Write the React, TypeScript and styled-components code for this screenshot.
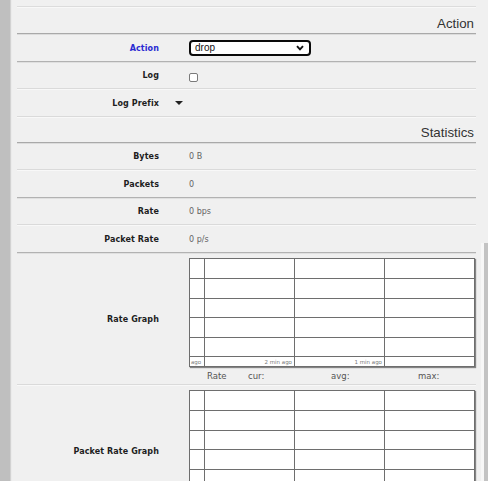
import React from "react";
import styled, { createGlobalStyle } from "styled-components";

const GlobalStyle = createGlobalStyle`
  html, body {
    margin: 0;
    padding: 0;
    height: 100%;
    background: #f0f0f0;
  }
  #root {
    height: 100%;
  }
`;

type Sep = "light" | "dark";

const sepColor = (s?: Sep) => (s === "dark" ? "#b2b2b2" : "#dadada");
const sepShine = (s?: Sep) => (s === "dark" ? "#e0e0e0" : "#f8f8f8");

const Page = styled.div`
  display: flex;
  height: 100vh;
  overflow: hidden;
  background: #f0f0f0;
  font-family: "DejaVu Sans", Verdana, sans-serif;
`;

const Sidebar = styled.div`
  flex: none;
  width: 10px;
  background: #bfbfbf;
  box-shadow: 1px 0 1px #d2d2d2;
`;

const Main = styled.div`
  flex: 1;
  min-width: 0;
  padding: 0 5px 0 7px;
`;

const ScrollTrack = styled.div`
  flex: none;
  display: flex;
  width: 7px;
  padding-top: 243px;
  box-sizing: border-box;
`;

const Thumb = styled.div`
  flex: 1;
  background: linear-gradient(to right, #f7f7f7 0 3px, #c3c3c3 3px);
`;

const Spacer = styled.div`
  height: 7px;
  box-sizing: border-box;
  border-bottom: 1px solid #dcdcdc;
  box-shadow: 0 1px 0 #f8f8f8;
`;

const SectionHeader = styled.div<{ $h: number }>`
  display: flex;
  align-items: flex-end;
  justify-content: flex-end;
  box-sizing: border-box;
  height: ${(p) => p.$h}px;
  padding: 0 2px 2px 0;
  font-family: "Liberation Sans", Arial, sans-serif;
  font-size: 13.3px;
  line-height: 15px;
  color: #333;
  border-bottom: 1px solid #a9a9a9;
  box-shadow: 0 1px 0 #dcdcdc;
`;

const Row = styled.div<{ $sep?: Sep; $auto?: boolean }>`
  display: grid;
  grid-template-columns: 142px 30px 1fr;
  align-items: center;
  box-sizing: border-box;
  height: ${(p) => (p.$auto ? "auto" : "27.5px")};
  padding: ${(p) => (p.$auto ? "5px 0 3px" : "2px 0 0")};
  border-bottom: 1px solid ${(p) => sepColor(p.$sep)};
  box-shadow: 0 1px 0 ${(p) => sepShine(p.$sep)};
`;

const Label = styled.div<{ $accent?: boolean }>`
  grid-column: 1;
  text-align: right;
  font-size: 8px;
  letter-spacing: 0.1px;
  font-weight: bold;
  white-space: nowrap;
  color: ${(p) => (p.$accent ? "#2a2ad2" : "#1e1e1e")};
`;

const Toggle = styled.div`
  grid-column: 2;
  justify-self: end;
  margin-right: 6px;
  width: 0;
  height: 0;
  border-left: 4px solid transparent;
  border-right: 4px solid transparent;
  border-top: 4px solid #222;
`;

const Value = styled.div`
  grid-column: 3;
  font-size: 8px;
  color: #646464;
`;

const SelectBox = styled.div`
  display: flex;
  align-items: center;
  justify-content: space-between;
  box-sizing: border-box;
  width: 122px;
  height: 16px;
  margin-top: -1px;
  padding: 0 5px 0 4px;
  background: #fff;
  border: 2px solid #0a0a0a;
  border-radius: 4px;
  font-family: "Liberation Sans", Arial, sans-serif;
  font-size: 10px;
  color: #111;
`;

const Check = styled.span`
  display: block;
  width: 9px;
  height: 9px;
  margin-top: 3px;
  box-sizing: border-box;
  background: #fff;
  border: 1px solid #7a7a7a;
  border-radius: 2px;
`;

const GraphBox = styled.div`
  width: 286px;
  height: 109px;
  box-shadow: 1px 1px 1px rgba(0, 0, 0, 0.45);
  svg {
    display: block;
  }
`;

const Legend = styled.div`
  display: grid;
  grid-template-columns: minmax(41px, max-content) 83px 87px auto;
  padding-left: 18px;
  margin-top: 4px;
  font-size: 8.5px;
  line-height: 10px;
  color: #555;
  white-space: nowrap;
`;

const LegendName = styled.span`
  padding-right: 6px;
`;

const hLines = [20, 40, 59, 79, 98];
const vLines = [15, 105, 195];

const Graph = () => (
  <GraphBox>
    <svg width={286} height={109} viewBox="0 0 286 109">
      <rect x={0.5} y={0.5} width={285} height={108} fill="#fff" stroke="#6e6e6e" />
      {hLines.map((y) => (
        <line key={y} x1={0} x2={286} y1={y + 0.5} y2={y + 0.5} stroke="#6e6e6e" />
      ))}
      {vLines.map((x) => (
        <line key={x} x1={x + 0.5} x2={x + 0.5} y1={0} y2={109} stroke="#6e6e6e" />
      ))}
      <g fontFamily="DejaVu Sans, sans-serif" fontSize={5.5} fill="#7a7a7a">
        <text x={2} y={106}>ago</text>
        <text x={103} y={106} textAnchor="end">2 min ago</text>
        <text x={193} y={106} textAnchor="end">1 min ago</text>
      </g>
    </svg>
  </GraphBox>
);

const GraphCell = ({ name }: { name: string }) => (
  <Value>
    <Graph />
    <Legend>
      <LegendName>{name}</LegendName>
      <span>cur:</span>
      <span>avg:</span>
      <span>max:</span>
    </Legend>
  </Value>
);

const Chevron = () => (
  <svg width="8" height="6" viewBox="0 0 8 6">
    <polyline points="1,1.2 4,4.4 7,1.2" fill="none" stroke="#111" strokeWidth="1.9" />
  </svg>
);

export default function App() {
  return (
    <>
      <GlobalStyle />
      <Page>
        <Sidebar />
        <Main>
          <Spacer />
          <SectionHeader $h={27}>Action</SectionHeader>
          <Row $sep="dark">
            <Label $accent>Action</Label>
            <Value>
              <SelectBox>
                <span>drop</span>
                <Chevron />
              </SelectBox>
            </Value>
          </Row>
          <Row>
            <Label>Log</Label>
            <Value>
              <Check />
            </Value>
          </Row>
          <Row>
            <Label>Log Prefix</Label>
            <Toggle />
          </Row>
          <SectionHeader $h={26}>Statistics</SectionHeader>
          <Row>
            <Label>Bytes</Label>
            <Value>0 B</Value>
          </Row>
          <Row $sep="dark">
            <Label>Packets</Label>
            <Value>0</Value>
          </Row>
          <Row>
            <Label>Rate</Label>
            <Value>0 bps</Value>
          </Row>
          <Row $sep="dark">
            <Label>Packet Rate</Label>
            <Value>0 p/s</Value>
          </Row>
          <Row $auto>
            <Label>Rate Graph</Label>
            <GraphCell name="Rate" />
          </Row>
          <Row $auto>
            <Label>Packet Rate Graph</Label>
            <GraphCell name="Packet Rate" />
          </Row>
        </Main>
        <ScrollTrack>
          <Thumb />
        </ScrollTrack>
      </Page>
    </>
  );
}
